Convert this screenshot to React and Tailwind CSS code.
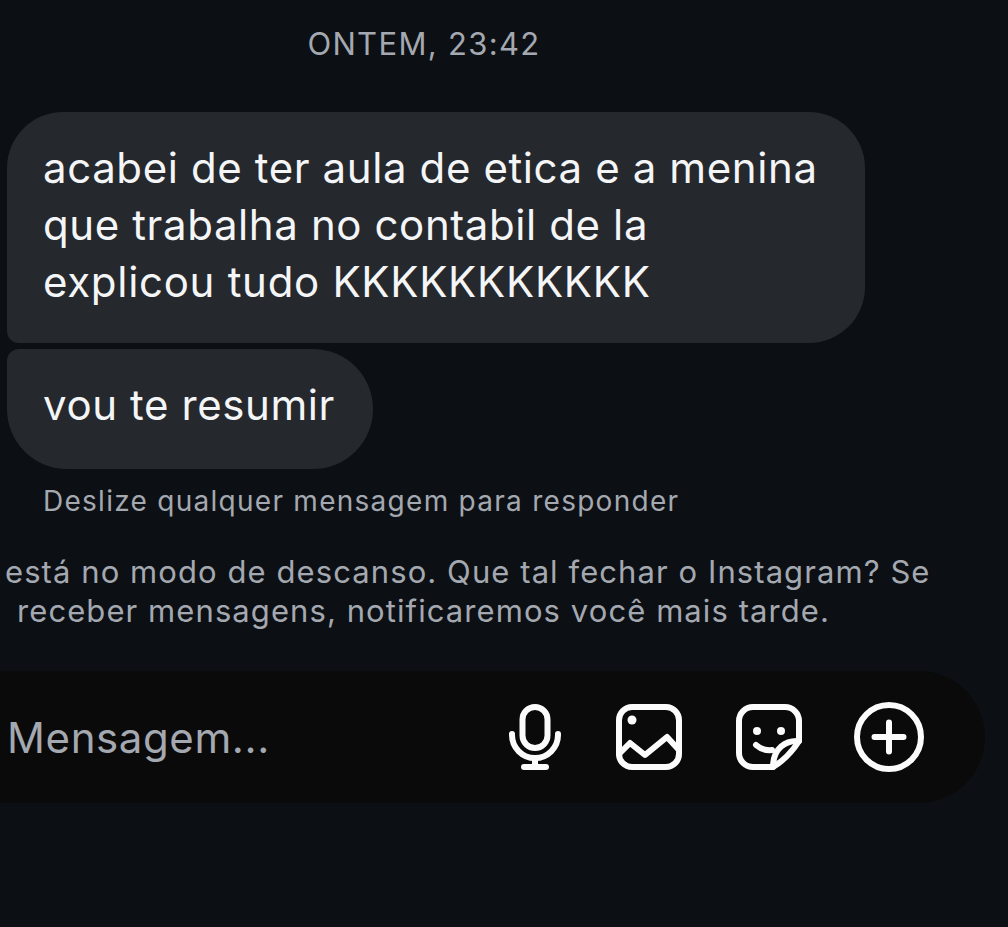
export default function App() {
  return (
    <div className="h-[927px] w-[1008px] overflow-hidden bg-[#0c1014] font-['Inter','Liberation_Sans',sans-serif] antialiased">
      <div className="h-[112px] pt-[26px]">
        <div className="w-[848px] text-center text-[31px] leading-[36px] tracking-[1.33px] text-[#a4a8b0]">ONTEM, 23:42</div>
      </div>
      <div className="flex flex-col items-start gap-[6px] pl-[7px]">
        <div className="h-[231px] w-[858px] rounded-[56px] rounded-bl-[12px] bg-[#25282d] pl-[36px] pt-[27px] text-[42px] leading-[57px] tracking-[0.6px] text-[#f4f5f6]">
          <div>acabei de ter aula de etica e a menina</div>
          <div>que trabalha no contabil de la</div>
          <div className="tracking-[0.7px]">explicou tudo KKKKKKKKKKK</div>
        </div>
        <div className="h-[120px] w-[366px] rounded-[60px] rounded-tl-[12px] bg-[#25282d] pl-[36px] pt-[27px] text-[42px] leading-[57px] tracking-[0.6px] text-[#f4f5f6]">vou te resumir</div>
      </div>
      <div className="mt-[16px] pl-[43px] text-[28px] leading-[32px] tracking-[1.27px] text-[#a4a8b0]">Deslize qualquer mensagem para responder</div>
      <div className="mt-[35px] text-[31px] leading-[39px] tracking-[1.08px] text-[#a4a8b0]">
        <div className="pl-[5px]">está no modo de descanso. Que tal fechar o Instagram? Se</div>
        <div className="pl-[17px]">receber mensagens, notificaremos você mais tarde.</div>
      </div>
      <div className="mt-[41px] flex h-[132px] w-[985px] items-center rounded-r-[66px] bg-[#0a0a0a] pl-[7px] pr-[61px]">
        <div className="pt-[2px] text-[42px] leading-[50px] tracking-[0.6px] text-[#a4a8b0]">Mensagem...</div>
        <div className="ml-auto flex items-center text-[#fbfbfb]">
          <svg width="54" height="66" viewBox="0 0 54 66" fill="none" stroke="currentColor" strokeWidth="6" strokeLinecap="round">
            <rect x="14.5" y="3" width="25" height="41" rx="12.5" />
            <path d="M4 30v1a23 23 0 0 0 46 0v-1" />
            <path d="M27 54v9" />
            <path d="M16 63h22" />
          </svg>
          <svg className="ml-[54px]" width="66" height="66" viewBox="0 0 66 66" fill="none" stroke="currentColor" strokeWidth="6" strokeLinecap="round" strokeLinejoin="round">
            <rect x="3" y="3" width="60" height="60" rx="13" />
            <circle cx="16" cy="16" r="4.5" fill="currentColor" stroke="none" />
            <path d="M3 50 14 39 29 51 51 33 63 46" />
          </svg>
          <svg className="ml-[54px]" width="66" height="66" viewBox="0 0 66 66" fill="none" stroke="currentColor" strokeWidth="6" strokeLinecap="round" strokeLinejoin="round">
            <path d="M37 63H17A14 14 0 0 1 3 49V17A14 14 0 0 1 17 3H49A14 14 0 0 1 63 17V37C56 48 47 57 37 63Z" />
            <path d="M63 37C50 36 37 44 37 63" />
            <circle cx="21" cy="27" r="4" fill="currentColor" stroke="none" />
            <circle cx="45" cy="27" r="4" fill="currentColor" stroke="none" />
            <path d="M20 41Q27 47 36 46" />
          </svg>
          <svg className="ml-[52px]" width="70" height="70" viewBox="0 0 70 70" fill="none" stroke="currentColor" strokeWidth="6" strokeLinecap="round">
            <circle cx="35" cy="35" r="32" />
            <path d="M35 20.5v29M20.5 35h29" />
          </svg>
        </div>
      </div>
    </div>
  );
}
